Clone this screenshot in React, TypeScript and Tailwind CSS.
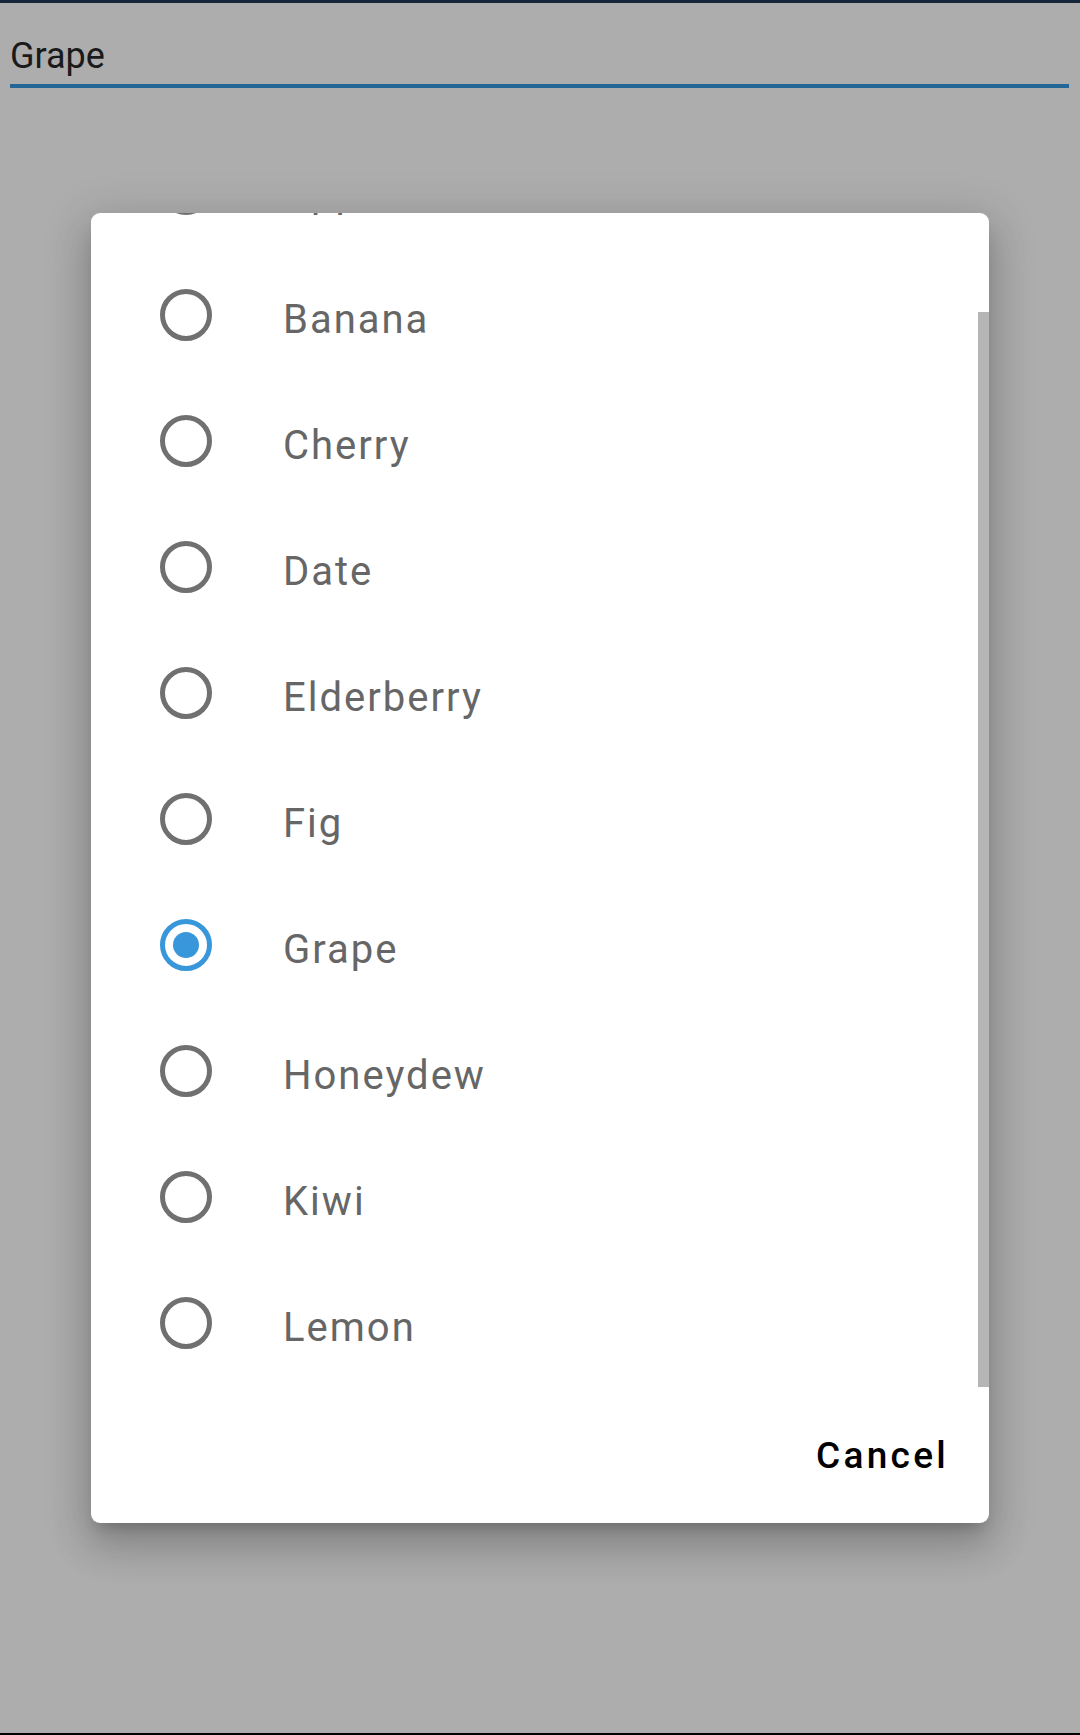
import React from "react";

const items = [
  "Apple",
  "Banana",
  "Cherry",
  "Date",
  "Elderberry",
  "Fig",
  "Grape",
  "Honeydew",
  "Kiwi",
  "Lemon",
];

export default function App() {
  return (
    <div
      className="relative w-[1080px] h-[1735px] bg-[#adadad] overflow-hidden flex flex-col"
      style={{ fontFamily: "Roboto, 'Noto Sans', sans-serif" }}
    >
      <div className="h-[3px] bg-[#16263a]" />
      <div className="pl-[10px] pr-[11px] pt-[29px]">
        <div className="text-[36px] leading-[48px] text-[#1a1a1a]">Grape</div>
        <div className="mt-[4px] h-[4px] bg-[#236796]" />
      </div>
      <div className="flex-1" />
      <div className="h-[2px] bg-black" />

      <div className="absolute left-[91px] top-[213px] w-[898px] h-[1310px] bg-white rounded-[9px] overflow-hidden flex flex-col shadow-[0_11px_15px_-7px_rgba(0,0,0,0.2),0_24px_38px_3px_rgba(0,0,0,0.14),0_9px_46px_8px_rgba(0,0,0,0.12)]">
        <div className="relative h-[1174px] overflow-hidden">
          <div className="flex flex-col mt-[-87px]">
            {items.map((name) => {
              const selected = name === "Grape";
              return (
                <div key={name} className="h-[126px] flex items-center pl-[69px]">
                  <div
                    className={
                      selected
                        ? "w-[52px] h-[52px] rounded-full border-[5px] border-[#3897da] flex items-center justify-center shrink-0"
                        : "w-[52px] h-[52px] rounded-full border-[5px] border-[#707070] shrink-0"
                    }
                  >
                    {selected && <div className="w-[26px] h-[26px] rounded-full bg-[#3897da]" />}
                  </div>
                  <div className="ml-[71px] mt-[9px] text-[40px] leading-none tracking-[2px] text-[#666666]">
                    {name}
                  </div>
                </div>
              );
            })}
          </div>
          <div className="absolute right-0 top-[99px] w-[11px] h-[1075px] bg-[#b5b5b5]" />
        </div>
        <div className="h-[136px] flex items-center justify-end pr-[40px]">
          <div className="text-[37px] leading-none font-medium tracking-[3.3px] text-black">
            Cancel
          </div>
        </div>
      </div>
    </div>
  );
}
